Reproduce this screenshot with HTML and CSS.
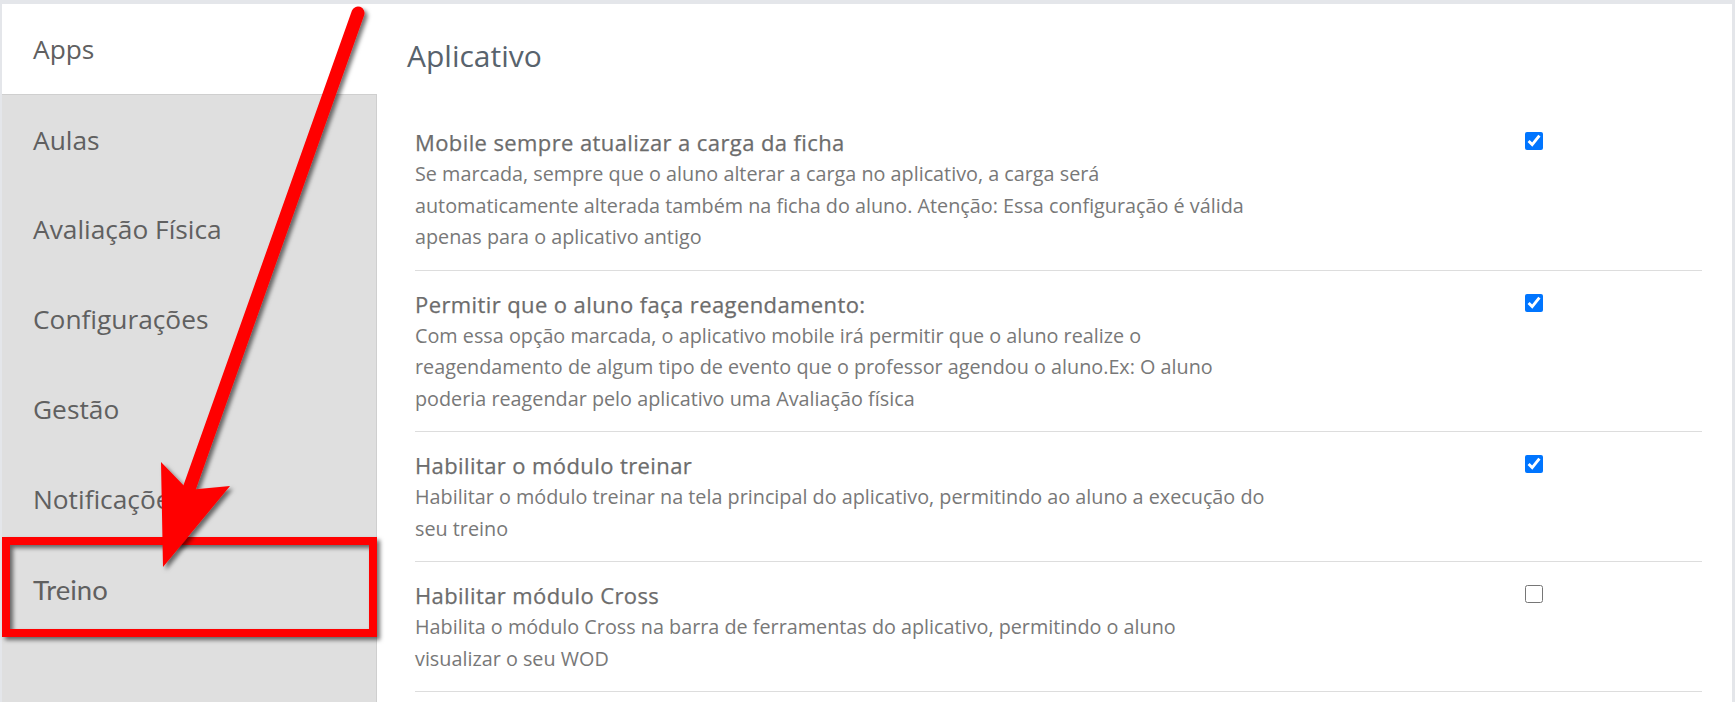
FILE: index.html
```html
<!DOCTYPE html>
<html lang="pt">
<head>
<meta charset="utf-8">
<title>Configurações - Aplicativo</title>
<link rel="stylesheet" href="styles.css">
</head>
<body>
<div class="page">
  <aside class="sidebar">
    <div class="nav-item active">Apps</div>
    <div class="nav-rest">
      <div class="nav-item">Aulas</div>
      <div class="nav-item">Avaliação Física</div>
      <div class="nav-item">Configurações</div>
      <div class="nav-item">Gestão</div>
      <div class="nav-item">Notificações</div>
      <div class="nav-item treino">Treino</div>
    </div>
  </aside>
  <main class="content">
    <h1 class="heading">Aplicativo</h1>
    <div class="settings">
      <div class="setting">
        <div class="text">
          <div class="title">Mobile sempre atualizar a carga da ficha</div>
          <div class="desc">Se marcada, sempre que o aluno alterar a carga no aplicativo, a carga será<br>automaticamente alterada também na ficha do aluno. Atenção: Essa configuração é válida<br>apenas para o aplicativo antigo</div>
        </div>
        <input class="check" type="checkbox" checked>
      </div>
      <div class="setting">
        <div class="text">
          <div class="title">Permitir que o aluno faça reagendamento:</div>
          <div class="desc">Com essa opção marcada, o aplicativo mobile irá permitir que o aluno realize o<br>reagendamento de algum tipo de evento que o professor agendou o aluno.Ex: O aluno<br>poderia reagendar pelo aplicativo uma Avaliação física</div>
        </div>
        <input class="check" type="checkbox" checked>
      </div>
      <div class="setting">
        <div class="text">
          <div class="title">Habilitar o módulo treinar</div>
          <div class="desc">Habilitar o módulo treinar na tela principal do aplicativo, permitindo ao aluno a execução do<br>seu treino</div>
        </div>
        <input class="check" type="checkbox" checked>
      </div>
      <div class="setting">
        <div class="text">
          <div class="title">Habilitar módulo Cross</div>
          <div class="desc">Habilita o módulo Cross na barra de ferramentas do aplicativo, permitindo o aluno<br>visualizar o seu WOD</div>
        </div>
        <input class="check" type="checkbox">
      </div>
    </div>
  </main>
</div>
<svg class="annotation" width="1735" height="702" viewBox="0 0 1735 702" aria-hidden="true">
  <defs>
    <filter id="shadow" x="-20%" y="-20%" width="140%" height="140%">
      <feDropShadow dx="3" dy="3" stdDeviation="2" flood-color="#000" flood-opacity="0.55"/>
    </filter>
  </defs>
  <rect x="6" y="541" width="367" height="92" fill="none" stroke="#ff0000" stroke-width="8" filter="url(#shadow)"/>
  <g filter="url(#shadow)">
    <line x1="358" y1="13" x2="188" y2="492" stroke="#ff0000" stroke-width="13" stroke-linecap="round"/>
    <polygon points="161,462 188,490 230,486 163,567" fill="#ff0000"/>
  </g>
</svg>
</body>
</html>
```

FILE: styles.css
```css
html, body {
  margin: 0;
  padding: 0;
}
body {
  background: #e4e6ea;
  width: 1735px;
  height: 702px;
  overflow: hidden;
  font-family: "Open Sans", "Lato", sans-serif;
}
.page {
  margin: 4px 3px 0 2px;
  height: 698px;
  background: #ffffff;
  display: flex;
}
.sidebar {
  width: 375px;
  display: flex;
  flex-direction: column;
  flex-shrink: 0;
}
.nav-rest {
  flex: 1;
  background: #dfdfdf;
  border-top: 1px solid #cfcfcf;
  border-right: 1px solid #cfcfcf;
}
.nav-item {
  height: 90px;
  display: flex;
  align-items: center;
  padding-left: 31px;
  font-size: 26.3px;
  color: #606060;
  box-sizing: border-box;
}
.nav-rest .nav-item:first-child {
  height: 89px;
}
.nav-item.active {
  background: #ffffff;
}
.nav-item.treino {
  font-family: "Lato", "Open Sans", sans-serif;
  font-size: 27.5px;
}
.content {
  flex: 1;
  padding: 0 30px 0 38px;
}
.heading {
  margin: 0 0 0 -8px;
  height: 105px;
  line-height: 104px;
  font-size: 30px;
  font-weight: 400;
  color: #58636d;
}
.settings {
  display: flex;
  flex-direction: column;
}
.setting {
  display: grid;
  grid-template-columns: 858px 252px 18px;
  padding: 17px 0 17px;
  border-bottom: 1px solid #dddddd;
}
.text {
  white-space: nowrap;
}
.title {
  font-size: 22px;
  line-height: 32px;
  letter-spacing: 0.4px;
  color: #6c6c6c;
  -webkit-text-stroke: 0.25px #6c6c6c;
}
.desc {
  font-size: 19.8px;
  line-height: 31.5px;
  color: #787878;
}
.check {
  grid-column: 3;
  width: 18px;
  height: 18px;
  margin: 6px 0 0 0;
  accent-color: #0075ff;
}
.annotation {
  position: absolute;
  left: 0;
  top: 0;
  pointer-events: none;
}
```
